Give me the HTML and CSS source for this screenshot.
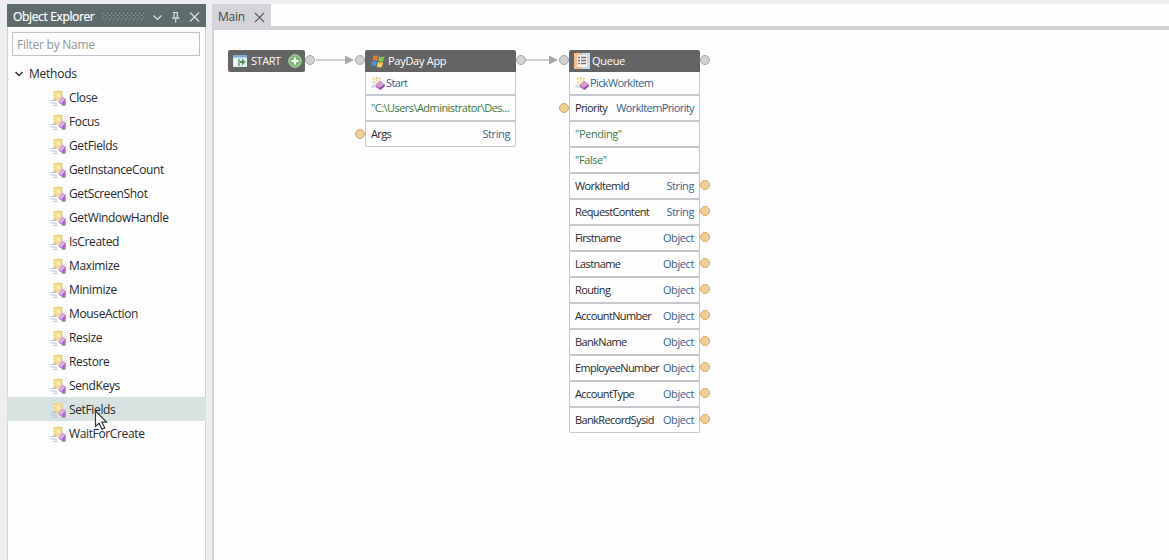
FILE: index.html
```html
<!DOCTYPE html>
<html lang="en">
<head>
<meta charset="utf-8">
<title>Object Explorer</title>
<link rel="stylesheet" href="styles.css">
</head>
<body>
<svg width="0" height="0" class="defs">
  <symbol id="method" viewBox="0 0 16 16">
    <path d="M3.500 1h9v9h-9z" fill="#f7e3a0"/>
    <path d="M3.500 1h2v1.500h-2zM7 .500h2V2H7zM10.500 1h2v1.500h-2zM3.500 4.800h1.500v1.500H3.500zM11 4.800h1.500v1.500H11zM4 8.200h2v1.500H4zM7 8.500h2V10H7zM6 2.800h1v1H6zM9 2.800h1v1H9z" fill="#e9c76c"/>
    <path d="M7 4.500h2v2H7z" fill="#fdf5d2"/>
    <path d="M1 10.500h6M0 13h7M3 15.300h4.500" stroke="#b6c2d2" stroke-width="1.100"/>
    <path d="M8.500 11l3.500-4.500 3.500 2v6.700l-2.500.8-4.500-3.500z" fill="#c98dd0"/>
    <path d="M8.500 11L12 6.500l3.500 2-3.500 4.500z" fill="#dbade0"/>
    <path d="M12 13l3.500-4.500v6.700L13 16z" fill="#aa68b8"/>
  </symbol>
  <symbol id="gem" viewBox="0 0 16 16">
    <path d="M2 2h2v2H2zM5.500 1h2v2.500h-2zM9 2h2v2H9zM2 6h2v2H2zM9 5.500h2v2H9zM5 8h2v2H5z" fill="#e8c769"/>
    <circle cx="6.500" cy="5.300" r="2" fill="#f9e9aa"/>
    <path d="M1 10.500h4M0 12.500h6" stroke="#b6c2d2"/>
    <path d="M5.500 10.500L10 5.500l5.500 4v2.500L10.500 16l-5-3.500z" fill="#ba69b9"/>
    <path d="M5.500 10.500L10 5.500l5.500 4-5 4z" fill="#d79ad5"/>
    <path d="M10.500 13.500l5-4v2.500L10.500 16z" fill="#8e4a9c"/>
  </symbol>
</svg>
<div class="app">
  <aside class="explorer">
    <header class="explorer-head">
      <span class="explorer-title">Object Explorer</span>
      <svg class="grip" width="42" height="7"><defs><pattern id="dots" width="4" height="4" patternUnits="userSpaceOnUse"><path d="M0 0h1v1H0zM2 2h1v1H2z" fill="#98a3a3"/></pattern></defs><rect width="42" height="7" fill="url(#dots)"/></svg>
      <svg class="tools" width="54" height="14" fill="none" stroke="#dce2e2" stroke-width="1.200"><path d="M3.500 5.500l4 4 4-4"/><path d="M23 2.500h5M24 2.500v5.500M27.300 2.500v5.500M22 8.200h7.500M25.700 8.500v4"/><path d="M40 2.500l9 9M49 2.500l-9 9"/></svg>
    </header>
    <div class="filter">Filter by Name</div>
    <div class="group"><svg width="10" height="8" fill="none" stroke="#333" stroke-width="1.500"><path d="M1.500 2l3.500 3.500L8.500 2"/></svg>Methods</div>
    <ul class="methods">
      <li><svg><use href="#method"/></svg>Close</li>
      <li><svg><use href="#method"/></svg>Focus</li>
      <li><svg><use href="#method"/></svg>GetFields</li>
      <li><svg><use href="#method"/></svg>GetInstanceCount</li>
      <li><svg><use href="#method"/></svg>GetScreenShot</li>
      <li><svg><use href="#method"/></svg>GetWindowHandle</li>
      <li><svg><use href="#method"/></svg>IsCreated</li>
      <li><svg><use href="#method"/></svg>Maximize</li>
      <li><svg><use href="#method"/></svg>Minimize</li>
      <li><svg><use href="#method"/></svg>MouseAction</li>
      <li><svg><use href="#method"/></svg>Resize</li>
      <li><svg><use href="#method"/></svg>Restore</li>
      <li><svg><use href="#method"/></svg>SendKeys</li>
      <li class="selected"><svg><use href="#method"/></svg>SetFields</li>
      <li><svg><use href="#method"/></svg>WaitForCreate</li>
    </ul>
  </aside>
  <main class="workspace">
    <div class="tabs"><div class="tab">Main<svg width="11" height="11" stroke="#606164" stroke-width="1.200"><path d="M1 1l9 9M10 1l-9 9"/></svg></div></div>
    <div class="canvas">
      <svg class="link link-a" width="44" height="10"><path d="M0 5h31" stroke="#b4b4b4" stroke-width="1.300"/><path d="M29 .5l9 4.500-9 4.500z" fill="#a8a8a8"/></svg>
      <svg class="link link-b" width="44" height="10"><path d="M0 5h26" stroke="#b4b4b4" stroke-width="1.300"/><path d="M23 .5l9 4.500-9 4.500z" fill="#a8a8a8"/></svg>
      <section class="node start">
        <div class="node-head">
          <svg width="14" height="12"><path d="M0 0h14v12H0z" fill="#dcecf5"/><path d="M0 0h14v2.500H0z" fill="#7eaad0"/><path d="M1 4h3v7H1z" fill="#f8fcff"/><path d="M5 4h2v7H5z" fill="#8bb594"/><path d="M7 6h2V3.500L12.500 7 9 10.500V8H7z" fill="#4f8d5a"/></svg>
          <span>START</span>
          <svg class="plus" width="14" height="14"><circle cx="7" cy="7" r="6.300" fill="#7fb878" stroke="#b5d9ae"/><path d="M7 3.500v7M3.500 7h7" stroke="#fff" stroke-width="2"/></svg>
          <i class="port out"></i>
        </div>
      </section>
      <section class="node payday">
        <div class="node-head">
          <svg width="14" height="14"><path d="M2.500 2Q5 .5 7.300 2L6.200 6.700Q4 5.300 1.300 6.700z" fill="#e8733c"/><path d="M8.200 2.400Q10.500 3.700 13.500 2.200L12.300 7Q9.800 8.300 7.100 7z" fill="#8cc152"/><path d="M1.100 7.500Q3.800 6.200 6 7.600L4.900 12.200Q2.500 11 0 12.300z" fill="#4d91d9"/><path d="M6.900 8Q9.500 9.200 12.100 7.900L11 12.800Q8.500 14 5.700 12.700z" fill="#f5cf52"/></svg>
          <span>PayDay App</span>
          <i class="port in"></i><i class="port out"></i>
        </div>
        <div class="action"><svg><use href="#gem"/></svg>Start</div>
        <div class="row"><span class="value path">"C:\Users\Administrator\Des...</span></div>
        <div class="row"><span>Args</span><span class="type">String</span><i class="port in data"></i></div>
      </section>
      <section class="node queue">
        <div class="node-head">
          <svg width="16" height="16"><path d="M0 0h16v16H0z" fill="#c4dced"/><path d="M0 0h8v16H0z" fill="#f4bd8a"/><path d="M3 2h10v12H3z" fill="#fbf4ec"/><path d="M4 4.500h2M4 7.500h2M4 10.500h2M7 4.500h5M7 7.500h5M7 10.500h5" stroke="#766d83" stroke-width="1.300"/></svg>
          <span>Queue</span>
          <i class="port in"></i><i class="port out"></i>
        </div>
        <div class="action"><svg><use href="#gem"/></svg>PickWorkItem</div>
        <div class="row"><span>Priority</span><span class="type wide">WorkItemPriority</span><i class="port in data"></i></div>
        <div class="row"><span class="value">"Pending"</span></div>
        <div class="row"><span class="value">"False"</span></div>
        <div class="row"><span>WorkItemId</span><span class="type">String</span><i class="port out data"></i></div>
        <div class="row"><span>RequestContent</span><span class="type">String</span><i class="port out data"></i></div>
        <div class="row"><span>Firstname</span><span class="type">Object</span><i class="port out data"></i></div>
        <div class="row"><span>Lastname</span><span class="type">Object</span><i class="port out data"></i></div>
        <div class="row"><span>Routing</span><span class="type">Object</span><i class="port out data"></i></div>
        <div class="row"><span>AccountNumber</span><span class="type">Object</span><i class="port out data"></i></div>
        <div class="row"><span>BankName</span><span class="type">Object</span><i class="port out data"></i></div>
        <div class="row"><span>EmployeeNumber</span><span class="type">Object</span><i class="port out data"></i></div>
        <div class="row"><span>AccountType</span><span class="type">Object</span><i class="port out data"></i></div>
        <div class="row"><span>BankRecordSysid</span><span class="type">Object</span><i class="port out data"></i></div>
      </section>
    </div>
  </main>
</div>
<svg class="cursor" width="15" height="21"><path d="M1.500 1v15.500l3.500-3.200 3 6 2.800-1.300-2.900-5.800h4.700z" fill="#fff" stroke="#33383a" stroke-width="1.200"/></svg>
</body>
</html>
```
FILE: styles.css
```css
* { box-sizing: border-box; }
body {
  margin: 0;
  background: #eeeef0;
  font: 12px/16px "Open Sans", "Noto Sans", sans-serif;
  letter-spacing: -0.25px;
  color: #25282c;
  overflow: hidden;
}
svg { display: block; flex: none; }
.defs { position: absolute; }
.app { display: flex; height: 560px; padding: 4px 0 0 7px; }

.explorer {
  width: 199px;
  flex: none;
  background: #fefefe;
  border: solid #d3d4da;
  border-width: 0 1px;
}
.explorer-head {
  display: flex;
  align-items: center;
  height: 23px;
  margin: 0 -1px;
  padding: 2px 2px 0 6px;
  background: #5f6c6d;
  color: #fff;
}
.explorer-title { width: 90px; white-space: nowrap; letter-spacing: -0.35px; -webkit-text-stroke: 0.2px #fff; }
.tools { margin-left: auto; }
.filter {
  height: 24px;
  margin: 5px 5px 0 4px;
  padding: 4px 4px 0;
  border: 1px solid #bfc4cb;
  color: #929699;
}
.group { display: flex; align-items: center; gap: 5px; height: 24px; margin-top: 5px; padding: 2px 0 0 6px; }
.methods { margin: 0; padding: 0; list-style: none; letter-spacing: -0.36px; }
.methods li { display: flex; align-items: center; gap: 3px; height: 24px; margin: 0 -1px; padding: 2px 0 0 43px; }
.methods .selected { background: #d7e3e0; }
.methods svg { width: 16px; height: 16px; }

.workspace { flex: 1; display: flex; flex-direction: column; margin-left: 6px; }
.tabs { height: 26px; background: #fefefe; border-bottom: 4px solid #d3d3d8; }
.tab {
  display: flex;
  align-items: center;
  justify-content: space-between;
  width: 59px;
  height: 26px;
  padding: 0 6px;
  background: #d3d3d8;
  color: #414449;
}
.canvas { position: relative; flex: 1; background: #fefefe; border-left: 2px solid #d3d3d8; }

/* Nodes sit freely on the automation canvas */
.node { position: absolute; top: 20px; border-radius: 2px; background: #fefefe; letter-spacing: -0.62px; font-size: 11px; }
.start { left: 14px; width: 77px; }
.payday { left: 151px; width: 151px; }
.queue { left: 355px; width: 131px; }
.node-head {
  position: relative;
  display: flex;
  align-items: center;
  gap: 4px;
  height: 22px;
  padding: 0 5px;
  border-radius: 2px 2px 0 0;
  background: #646464;
  color: #fff;
  letter-spacing: -0.28px;
}
.start .node-head { border-radius: 2px; letter-spacing: -0.45px; }
.payday .node-head { padding-left: 6px; gap: 3px; }
.queue .node-head { gap: 2px; }
.plus { margin-left: auto; margin-right: -2px; }
.action, .row {
  position: relative;
  display: flex;
  align-items: center;
  height: 26px;
  padding: 0 5px;
  border: solid #c6c7ce;
  border-width: 0 1px 2px;
  white-space: nowrap;
}
.action { height: 24px; gap: 1px; color: #345e91; }
.action svg { width: 14px; height: 14px; }
.row { justify-content: space-between; }
.row:last-child { height: 25px; border-bottom-width: 1px; border-radius: 0 0 2px 2px; }
.type { color: #345e91; letter-spacing: -0.4px; }
.type.wide { letter-spacing: -0.62px; }
.value { color: #397a3e; letter-spacing: -0.42px; }
.value.path { letter-spacing: -0.55px; }
.port {
  position: absolute;
  top: 5px;
  width: 10px;
  height: 10px;
  border: 1px solid #a2a4a6;
  border-radius: 50%;
  background: #d1d2d4;
}
.port.in { left: -10px; }
.port.out { right: -10px; }
.port.data { top: 7px; border-color: #d5a662; background: #efd09b; }
.row .port.in { left: -11px; }
.row .port.out { right: -11px; top: 6px; }
.link { position: absolute; top: 25px; }
.link-a { left: 102px; }
.link-b { left: 312px; }
.cursor { position: absolute; left: 94px; top: 410px; }
```
